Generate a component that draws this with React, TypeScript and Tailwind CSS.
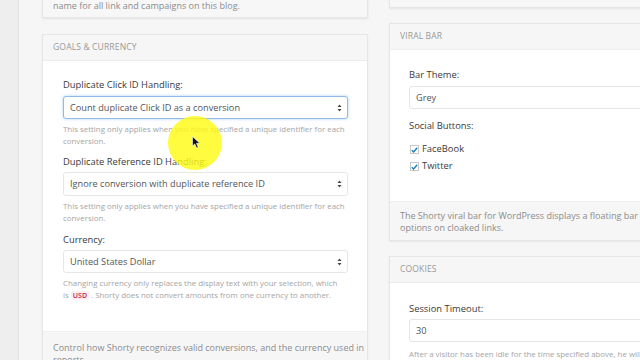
import React from "react";

const font = { fontFamily: '"Open Sans", "Liberation Sans", sans-serif' };

function Arrows() {
  return (
    <svg width="5" height="8" viewBox="0 0 5 8" className="shrink-0">
      <path d="M2.5 0.5 L4.5 3 L0.5 3 Z" fill="#444" />
      <path d="M2.5 7.5 L4.5 5 L0.5 5 Z" fill="#444" />
    </svg>
  );
}

function Select({ text, focused, h = 23, arrows = true }: { text: string; focused?: boolean; h?: number; arrows?: boolean }) {
  return (
    <div
      className={
        "flex items-center justify-between pl-[6px] pr-[5px] rounded-[3px] bg-white text-[9.2px] text-[#555] " +
        (focused
          ? "border border-[#8fbbe6] shadow-[0_0_3px_rgba(102,175,233,0.6)]"
          : "border border-[#e6e6e6]")
      }
      style={{ height: h }}
    >
      <span>{text}</span>
      {arrows && <Arrows />}
    </div>
  );
}

function Label({ children }: { children: React.ReactNode }) {
  return <div className="text-[9.4px] leading-[12px] text-[#3a3a3a]">{children}</div>;
}

function Help({ children }: { children: React.ReactNode }) {
  return <div className="text-[7.9px] leading-[12px] text-[#a5a5a5] mt-[4px] whitespace-nowrap">{children}</div>;
}

function Header({ children }: { children: React.ReactNode }) {
  return (
    <div className="h-[26px] flex items-center px-[10px] bg-[#f6f6f6] border-b border-[#ececec] text-[8.6px] text-[#999] tracking-[0.1px]">
      {children}
    </div>
  );
}

function Check({ label }: { label: string }) {
  return (
    <div className="flex items-center gap-[3px] h-[17px]">
      <div className="w-[9px] h-[9px] border border-[#c8c8c8] bg-white flex items-center justify-center">
        <svg width="7" height="6" viewBox="0 0 7 6">
          <path d="M0.8 3.2 L2.6 5 L6.2 0.8" stroke="#1e7fb8" strokeWidth="1.4" fill="none" />
        </svg>
      </div>
      <span className="text-[9.4px] text-[#3a3a3a]">{label}</span>
    </div>
  );
}

export default function App() {
  return (
    <div className="relative w-[640px] h-[360px] overflow-hidden flex items-start bg-[#f6f6f6]" style={font}>
      <div className="w-[19px] h-[360px] shrink-0 bg-[#eeeeee] border-r border-[#e2e2e2]" />
      <div className="flex items-start gap-[21px] pl-[23px]">
        {/* Left column */}
        <div className="w-[326px] shrink-0 flex flex-col gap-[16px]">
          <div className="h-[18px] shrink-0 bg-[#f7f7f7] border-x border-b border-[#e6e6e6] shadow-[0_1px_2px_rgba(0,0,0,0.08)] px-[10px]">
            <div className="text-[9px] leading-[12px] text-[#8c8c8c]">name for all link and campaigns on this blog.</div>
          </div>
          <div className="shrink-0 bg-white border border-[#e6e6e6] shadow-[0_1px_2px_rgba(0,0,0,0.06)]">
            <Header>GOALS &amp; CURRENCY</Header>
            <div className="pl-[20px] pr-[19px] pt-[18px] pb-[29px]">
              <Label>Duplicate Click ID Handling:</Label>
              <div className="mt-[5px]">
                <Select text="Count duplicate Click ID as a conversion" focused h={23} />
              </div>
              <Help>
                This setting only applies when you have specified a unique identifier for each
                <br />
                conversion.
              </Help>
              <div className="mt-[9px]">
                <Label>Duplicate Reference ID Handling:</Label>
              </div>
              <div className="mt-[4px]">
                <Select text="Ignore conversion with duplicate reference ID" h={24} />
              </div>
              <Help>
                This setting only applies when you have specified a unique identifier for each
                <br />
                conversion.
              </Help>
              <div className="mt-[10px]">
                <Label>Currency:</Label>
              </div>
              <div className="mt-[4px]">
                <Select text="United States Dollar" h={23} />
              </div>
              <Help>
                Changing currency only replaces the display text with your selection, which
                <br />
                is{" "}
                <span className="text-[7px] font-semibold text-[#c7254e] bg-[#f9eef2] px-[2px] rounded-[2px]">USD</span>{" "}
                . Shorty does not convert amounts from one currency to another.
              </Help>
            </div>
            <div className="bg-[#f6f6f6] border-t border-[#efefef] px-[10px] pt-[10px] pb-[8px] text-[9px] leading-[12px] text-[#8c8c8c] whitespace-nowrap">
              Control how Shorty recognizes valid conversions, and the currency used in
              <br />
              reports.
            </div>
          </div>
        </div>

        {/* Right column */}
        <div className="w-[326px] shrink-0 flex flex-col gap-[15px]">
          <div className="h-[8px] shrink-0 bg-[#f7f7f7] border-x border-b border-[#e6e6e6] shadow-[0_1px_2px_rgba(0,0,0,0.08)]" />
          <div className="shrink-0 bg-white border border-[#e6e6e6] shadow-[0_1px_2px_rgba(0,0,0,0.06)]">
            <Header>VIRAL BAR</Header>
            <div className="pl-[19px] pr-[19px] pt-[19px] pb-[26px]">
              <Label>Bar Theme:</Label>
              <div className="mt-[5px]">
                <Select text="Grey" h={23} arrows={false} />
              </div>
              <div className="mt-[11px]">
                <Label>Social Buttons:</Label>
              </div>
              <div className="mt-[9px] pl-[1px]">
                <Check label="FaceBook" />
                <Check label="Twitter" />
              </div>
            </div>
            <div className="bg-[#f6f6f6] border-t border-[#efefef] px-[10px] pt-[8px] pb-[6px] text-[9px] leading-[12px] text-[#8c8c8c] whitespace-nowrap">
              The Shorty viral bar for WordPress displays a floating bar with sharing
              <br />
              options on cloaked links.
            </div>
          </div>
          <div className="shrink-0 bg-white border border-[#e6e6e6] shadow-[0_1px_2px_rgba(0,0,0,0.06)]">
            <Header>COOKIES</Header>
            <div className="pl-[19px] pr-[19px] pt-[20px] pb-[20px]">
              <Label>Session Timeout:</Label>
              <div className="mt-[4px]">
                <Select text="30" h={23} arrows={false} />
              </div>
              <div className="text-[7.9px] leading-[12px] text-[#a5a5a5] mt-[6px] whitespace-nowrap">
                After a visitor has been idle for the time specified above, he will be treated as a new visitor
              </div>
            </div>
          </div>
        </div>
      </div>

      {/* cursor highlight */}
      <div className="absolute left-[168px] top-[116px] w-[54px] h-[54px] rounded-full bg-[rgba(255,250,20,0.82)]" />
      <svg className="absolute left-[192px] top-[136px]" width="9" height="13" viewBox="0 0 9 13">
        <path d="M0.5 0.5 L0.5 10 L2.8 7.9 L4.6 12 L6.2 11.3 L4.5 7.3 L7.8 7.3 Z" fill="#111" stroke="#fff" strokeWidth="0.6" />
      </svg>
    </div>
  );
}
